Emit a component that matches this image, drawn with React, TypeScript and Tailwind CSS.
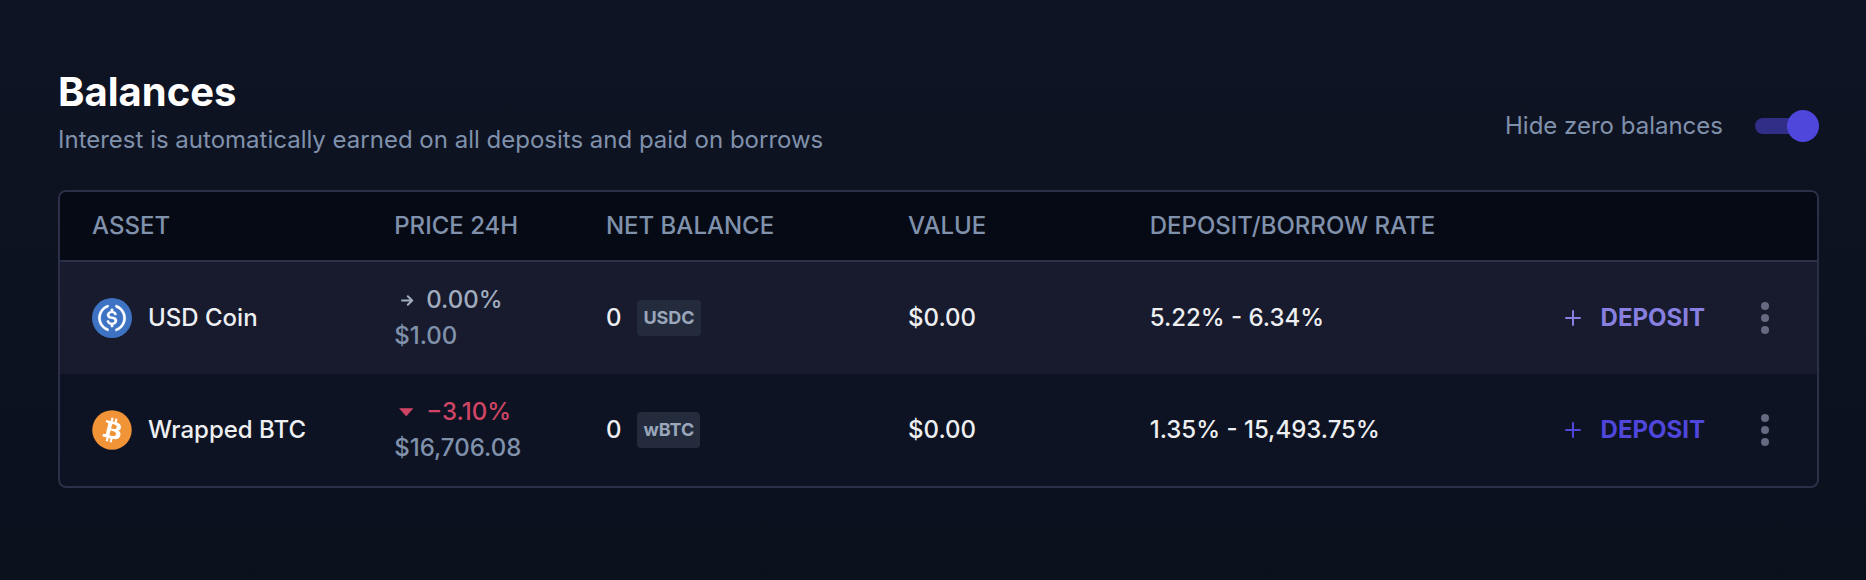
type Trend = "flat" | "down";

interface Asset {
  name: string;
  symbol: string;
  trend: Trend;
  change: string;
  price: string;
  balance: string;
  value: string;
  rate: string;
  active: boolean;
}

const assets: Asset[] = [
  {
    name: "USD Coin",
    symbol: "USDC",
    trend: "flat",
    change: "0.00%",
    price: "$1.00",
    balance: "0",
    value: "$0.00",
    rate: "5.22% - 6.34%",
    active: true,
  },
  {
    name: "Wrapped BTC",
    symbol: "wBTC",
    trend: "down",
    change: "−3.10%",
    price: "$16,706.08",
    balance: "0",
    value: "$0.00",
    rate: "1.35% - 15,493.75%",
    active: false,
  },
];

function UsdcIcon() {
  return (
    <svg viewBox="0 0 32 32" className="size-10 shrink-0" aria-hidden="true">
      <circle cx="16" cy="16" r="16" fill="#3e73c4" />
      <path
        fill="#fff"
        stroke="#fff"
        strokeWidth=".3"
        d="M20.022 18.124c0-2.124-1.28-2.852-3.84-3.156-1.828-.243-2.193-.728-2.193-1.578 0-.85.61-1.396 1.828-1.396 1.097 0 1.707.364 2.011 1.275a.458.458 0 00.427.303h.975a.416.416 0 00.427-.425v-.06a3.04 3.04 0 00-2.743-2.489V9.142c0-.243-.183-.425-.487-.486h-.915c-.243 0-.426.182-.487.486v1.396c-1.829.242-2.986 1.456-2.986 2.974 0 2.002 1.218 2.791 3.778 3.095 1.707.303 2.255.668 2.255 1.639 0 .97-.853 1.638-2.011 1.638-1.585 0-2.133-.667-2.316-1.578-.06-.242-.244-.364-.427-.364h-1.036a.416.416 0 00-.426.425v.06c.243 1.518 1.219 2.61 3.23 2.914v1.457c0 .242.183.425.487.485h.915c.243 0 .426-.182.487-.485V21.34c1.829-.303 3.047-1.578 3.047-3.217z"
      />
      <path
        fill="#fff"
        stroke="#fff"
        strokeWidth=".3"
        d="M12.892 24.497c-4.754-1.7-7.192-6.98-5.424-11.653.914-2.55 2.925-4.491 5.424-5.402.244-.121.365-.303.365-.607v-.85c0-.242-.121-.424-.365-.485-.061 0-.183 0-.244.06a10.895 10.895 0 00-7.13 13.717c1.096 3.4 3.717 6.01 7.13 7.102.244.121.488 0 .548-.243.061-.06.061-.122.061-.243v-.85c0-.182-.182-.424-.365-.546zm6.46-18.936c-.244-.122-.488 0-.548.242-.061.061-.061.122-.061.243v.85c0 .243.182.485.365.607 4.754 1.7 7.192 6.98 5.424 11.653-.914 2.55-2.925 4.491-5.424 5.402-.244.121-.365.303-.365.607v.85c0 .242.121.424.365.485.061 0 .183 0 .244-.06a10.895 10.895 0 007.13-13.717c-1.096-3.46-3.778-6.07-7.13-7.162z"
      />
    </svg>
  );
}

function BtcIcon() {
  return (
    <svg viewBox="0 0 32 32" className="size-10 shrink-0" aria-hidden="true">
      <circle cx="16" cy="16" r="15.8" fill="#f09437" />
      <path
        fill="#fff"
        d="M23.189 14.02c.314-2.096-1.283-3.223-3.465-3.975l.708-2.84-1.728-.43-.69 2.765c-.454-.114-.92-.22-1.385-.326l.695-2.783L15.596 6l-.708 2.839c-.376-.086-.746-.17-1.104-.26l.002-.009-2.384-.595-.46 1.846s1.283.294 1.256.312c.7.175.826.638.805 1.006l-.806 3.235c.048.012.11.03.18.057l-.183-.045-1.13 4.532c-.086.212-.303.531-.793.41.018.025-1.256-.313-1.256-.313l-.858 1.978 2.25.561c.418.105.828.215 1.231.318l-.715 2.872 1.727.43.708-2.84c.472.127.93.245 1.378.357l-.706 2.828 1.728.43.715-2.866c2.948.558 5.164.333 6.097-2.333.752-2.146-.037-3.385-1.588-4.192 1.13-.26 1.98-1.003 2.207-2.538zm-3.95 5.538c-.533 2.147-4.148.986-5.32.695l.95-3.805c1.172.293 4.929.872 4.37 3.11zm.535-5.569c-.487 1.953-3.495.96-4.47.717l.86-3.45c.975.243 4.118.696 3.61 2.733z"
      />
    </svg>
  );
}

function TrendIcon({ trend }: { trend: Trend }) {
  return (
    <svg viewBox="0 0 24 24" className="size-6 shrink-0" aria-hidden="true">
      {trend === "flat" ? (
        <path
          d="M8 12.5h10M13.8 8.2l4.4 4.3-4.4 4.3"
          fill="none"
          stroke="currentColor"
          strokeWidth="2"
          strokeLinecap="round"
          strokeLinejoin="round"
        />
      ) : (
        <path d="M5.6 8.6h13.2L12.2 16z" fill="currentColor" stroke="currentColor" strokeWidth=".6" strokeLinejoin="round" />
      )}
    </svg>
  );
}

function AssetRow({ asset }: { asset: Asset }) {
  return (
    <tr className={asset.active ? "h-28 bg-[#171b2d]" : "h-28"}>
      <td className="pl-8">
        <div className="flex items-center gap-4">
          {asset.symbol === "USDC" ? <UsdcIcon /> : <BtcIcon />}
          <span>{asset.name}</span>
        </div>
      </td>
      <td className="pl-8 leading-9">
        <div className={asset.trend === "flat" ? "flex items-center gap-2 text-[#a1adbf]" : "flex items-center gap-2 text-[#d04565]"}>
          <TrendIcon trend={asset.trend} />
          {asset.change}
        </div>
        <div className="text-[#8091ac]">{asset.price}</div>
      </td>
      <td className="pl-8">
        <div className="flex items-center gap-4">
          {asset.balance}
          <span className="rounded-sm bg-[#232b3d] px-1.5 py-1 text-[18px] leading-7 font-bold text-[#9aa7ba]">
            {asset.symbol}
          </span>
        </div>
      </td>
      <td className="pl-8">{asset.value}</td>
      <td className="pl-8">{asset.rate}</td>
      <td className="pr-10">
        <div className="flex items-center justify-end gap-12">
          <button
            type="button"
            className={
              asset.active
                ? "flex items-center gap-5 font-bold text-[#8780e0]"
                : "flex items-center gap-5 font-bold text-[#4f46dc]"
            }
          >
            <svg viewBox="0 0 16 16" className="size-4" aria-hidden="true">
              <path d="M8 1v14M1 8h14" stroke="currentColor" strokeWidth="2" strokeLinecap="round" />
            </svg>
            DEPOSIT
          </button>
          <button type="button" aria-label={`More actions for ${asset.name}`} className="text-[#666a80]">
            <svg viewBox="0 0 24 32" className="h-8 w-6" fill="currentColor" aria-hidden="true">
              <circle cx="12" cy="4" r="4" />
              <circle cx="12" cy="16" r="4" />
              <circle cx="12" cy="28" r="4" />
            </svg>
          </button>
        </div>
      </td>
    </tr>
  );
}

export default function App() {
  return (
    <main className="min-h-screen bg-linear-to-b from-[#0f1424] to-[#0a101c] pt-17 pr-[47px] pb-20 pl-[58px] font-['Inter',sans-serif] text-2xl text-[#eeeff2]">
      <header className="flex items-end justify-between">
        <div>
          <h1 className="text-[40px] leading-12 font-bold text-white">Balances</h1>
          <p className="mt-2 leading-8 text-[#8091ac]">
            Interest is automatically earned on all deposits and paid on borrows
          </p>
        </div>
        <label className="mb-3.5 flex items-center gap-8 leading-8 text-[#8091ac]">
          Hide zero balances
          <input
            type="checkbox"
            defaultChecked
            className="flex h-4 w-16 appearance-none items-center rounded-full bg-[#312e87] before:size-8 before:shrink-0 before:rounded-full before:bg-[#4f46dc] checked:justify-end"
          />
        </label>
      </header>

      <section className="mt-[34px] overflow-hidden rounded-lg border-2 border-[#2a3047] bg-[#0d1322]">
        <table className="w-full table-fixed border-separate border-spacing-0 text-left font-medium">
          <colgroup>
            <col className="w-[17.2%]" />
            <col className="w-[12.05%]" />
            <col className="w-[17.2%]" />
            <col className="w-[13.75%]" />
            <col />
            <col className="w-[285px]" />
          </colgroup>
          <thead className="bg-[#060a15] text-[#8091ac]">
            <tr className="h-[70px] *:border-b-2 *:border-[#2a3047]">
              <th className="pl-8 font-medium">ASSET</th>
              <th className="pl-8 font-medium">PRICE 24H</th>
              <th className="pl-8 font-medium">NET BALANCE</th>
              <th className="pl-8 font-medium">VALUE</th>
              <th className="pl-8 font-medium">DEPOSIT/BORROW RATE</th>
              <td />
            </tr>
          </thead>
          <tbody>
            {assets.map((asset) => (
              <AssetRow key={asset.symbol} asset={asset} />
            ))}
          </tbody>
        </table>
      </section>
    </main>
  );
}
